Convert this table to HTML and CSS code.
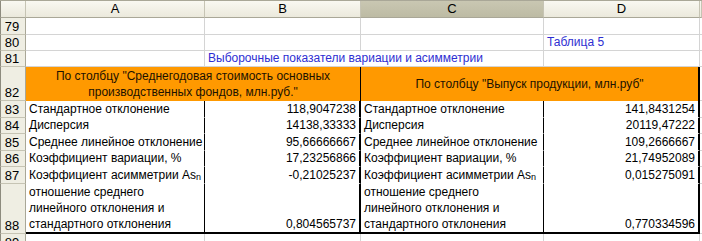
FILE: index.html
```html
<!DOCTYPE html>
<html lang="ru">
<head>
<meta charset="utf-8">
<title>Лист</title>
<link rel="stylesheet" href="styles.css">
</head>
<body>
<div class="sheet">
  <div class="hd corner"></div><div class="hd">A</div><div class="hd">B</div><div class="hd sel">C</div><div class="hd">D</div><div class="hd"></div>

  <div class="rh">79</div><div class="c"></div><div class="c"></div><div class="c"></div><div class="c"></div><div class="c"></div>
  <div class="rh">80</div><div class="c"></div><div class="c"></div><div class="c"></div><div class="c blue">Таблица 5</div><div class="c"></div>
  <div class="rh">81</div><div class="c"></div><div class="c blue span2">Выборочные показатели вариации и асимметрии</div><div class="c"></div><div class="c"></div>
  <div class="rh">82</div><div class="o span2 o-left">По столбцу "Среднегодовая стоимость основных производственных фондов, млн.руб."</div><div class="o span2">По столбцу "Выпуск продукции, млн.руб"</div><div class="c"></div>

  <div class="rh">83</div><div class="t">Стандартное отклонение</div><div class="t num mid">118,9047238</div><div class="t">Стандартное отклонение</div><div class="t num end">141,8431254</div><div class="c"></div>
  <div class="rh">84</div><div class="t">Дисперсия</div><div class="t num mid">14138,33333</div><div class="t">Дисперсия</div><div class="t num end">20119,47222</div><div class="c"></div>
  <div class="rh">85</div><div class="t">Среднее линейное отклонение</div><div class="t num mid">95,66666667</div><div class="t">Среднее линейное отклонение</div><div class="t num end">109,2666667</div><div class="c"></div>
  <div class="rh">86</div><div class="t">Коэффициент вариации, %</div><div class="t num mid">17,23256866</div><div class="t">Коэффициент вариации, %</div><div class="t num end">21,74952089</div><div class="c"></div>
  <div class="rh">87</div><div class="t"><span>Коэффициент асимметрии As<sub>n</sub></span></div><div class="t num mid">-0,21025237</div><div class="t"><span>Коэффициент асимметрии As<sub>n</sub></span></div><div class="t num end">0,015275091</div><div class="c"></div>
  <div class="rh">88</div><div class="t last multi">отношение среднего<br>линейного отклонения и<br>стандартного отклонения</div><div class="t num mid last">0,804565737</div><div class="t last multi">отношение среднего<br>линейного отклонения и<br>стандартного отклонения</div><div class="t num end last">0,770334596</div><div class="c"></div>

  <div class="rh">89</div><div class="c"></div><div class="c"></div><div class="c"></div><div class="c"></div><div class="c"></div>
</div>
</body>
</html>
```

FILE: styles.css
```css
* { box-sizing: border-box; }

body {
  margin: 0;
  background: #fff;
  font-family: "Liberation Sans", Arial, sans-serif;
  font-size: 12px;
  color: #000;
}

.sheet {
  display: grid;
  grid-template-columns: 26px 179px 156px 183px 156px 2px;
  grid-template-rows: 17px 17px 16px 16px 34px 17px 16px 17px 16px 17px 50px 17px;
  width: 702px;
  height: 241px;
  overflow: hidden;
  border-top: 1px solid #a9a797;
}

.hd {
  display: flex;
  align-items: center;
  justify-content: center;
  background: linear-gradient(#f9f8f1, #ebe9dc);
  border-right: 1px solid #c6c4b4;
  border-bottom: 1px solid #a9a797;
  line-height: 16px;
  font-size: 13px;
  color: #000;
}

.hd.corner {
  border-left: 1px solid #8d8b7e;
}

.hd.sel {
  background: linear-gradient(#c9c7b2, #bdbba4);
}

.rh {
  display: flex;
  align-items: flex-end;
  justify-content: center;
  background: #efeee3;
  border-left: 1px solid #8d8b7e;
  border-right: 1px solid #a9a797;
  border-bottom: 1px solid #c6c4b4;
  line-height: 15px;
  font-size: 13px;
  padding-right: 2px;
}

.c {
  display: flex;
  align-items: flex-end;
  border-right: 1px solid #d4d4d4;
  border-bottom: 1px solid #d4d4d4;
  padding: 0 3px;
  white-space: nowrap;
  overflow: hidden;
  line-height: 15px;
}

.blue {
  color: #2e2ed2;
}

.span2 {
  grid-column: span 2;
}

.o {
  display: flex;
  align-items: center;
  justify-content: center;
  text-align: center;
  background: #ff9900;
  color: #1c1200;
  border-right: 2px solid #000;
  line-height: 16px;
  padding: 0 20px;
}

.o.o-left {
  border-right: 1px solid #000;
}

.t {
  display: flex;
  align-items: flex-end;
  background: #fff;
  border-right: 1px solid #000;
  border-bottom: 1px solid #fff;
  padding: 0 3px;
  white-space: nowrap;
  overflow: hidden;
  line-height: 15px;
}

.num {
  justify-content: flex-end;
}

.mid {
  border-right: 2px solid #000;
}

.end {
  border-right: 2px solid #000;
}

.last {
  border-bottom: 2px solid #000;
}

.multi {
  line-height: 16px;
  white-space: normal;
}

sub {
  font-size: 9px;
  vertical-align: -1px;
  line-height: 0;
}
```
